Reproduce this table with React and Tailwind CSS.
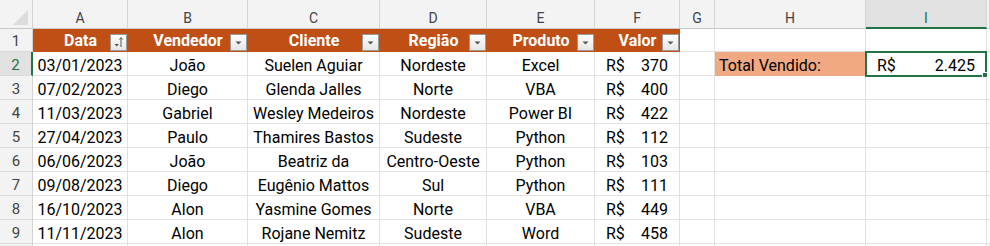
import React from "react";

const cols = ["A", "B", "C", "D", "E", "F", "G", "H", "I", ""];

const data = [
  ["03/01/2023", "João", "Suelen Aguiar", "Nordeste", "Excel", "370"],
  ["07/02/2023", "Diego", "Glenda Jalles", "Norte", "VBA", "400"],
  ["11/03/2023", "Gabriel", "Wesley Medeiros", "Nordeste", "Power BI", "422"],
  ["27/04/2023", "Paulo", "Thamires Bastos", "Sudeste", "Python", "112"],
  ["06/06/2023", "João", "Beatriz da", "Centro-Oeste", "Python", "103"],
  ["09/08/2023", "Diego", "Eugênio Mattos", "Sul", "Python", "111"],
  ["16/10/2023", "Alon", "Yasmine Gomes", "Norte", "VBA", "449"],
  ["11/11/2023", "Alon", "Rojane Nemitz", "Sudeste", "Word", "458"],
];

const headers = ["Data", "Vendedor", "Cliente", "Região", "Produto", "Valor"];

function FilterButton({ sort }) {
  return (
    <div className="absolute right-[1px] bottom-[1px] w-[17px] h-[17px] border border-[#9a9a9a] bg-gradient-to-b from-[#ffffff] to-[#e6e6e6] flex items-center justify-center">
      {sort ? (
        <svg width="15" height="15" viewBox="0 0 15 15">
          <polygon points="3.5,9 8,9 5.75,11.5" fill="#555" />
          <line x1="10" y1="2.5" x2="10" y2="12" stroke="#555" strokeWidth="1" />
          <polyline points="8.3,4.6 10,2.8 11.7,4.6" fill="none" stroke="#555" strokeWidth="1" />
        </svg>
      ) : (
        <svg width="15" height="15" viewBox="0 0 15 15">
          <polygon points="4.5,6.5 10.5,6.5 7.5,9.5" fill="#555" />
        </svg>
      )}
    </div>
  );
}

function RowHeader({ n, active, first }) {
  return (
    <div
      className={
        "text-center text-[15px] leading-[19px] border-b border-b-[#dadada] " +
        (first ? "h-[23px] pt-[3px] " : "h-[24px] pt-[4px] ") +
        (active
          ? "bg-[#e1e1e1] text-[#1e7145] border-r-2 border-r-[#217346]"
          : "bg-[#f3f3f3] text-[#444444] border-r border-r-[#d4d4d4]")
      }
    >
      {n}
    </div>
  );
}

export default function App() {
  return (
    <div className="w-[990px] h-[246px] overflow-hidden bg-white font-['Roboto',sans-serif] text-black">
      <div className="grid grid-cols-[33px_95px_120px_132px_107px_108px_85px_35px_151px_121px_3px]">
        {/* Column header row */}
        <div className="h-[29px] bg-[#f3f3f3] border-r border-r-[#d4d4d4] border-b border-b-[#c8c8c8] flex items-end justify-end pr-[4px] pb-[3px]">
          <svg width="15" height="15" viewBox="0 0 15 15">
            <polygon points="15,0 15,15 0,15" fill="#dcdcdc" />
          </svg>
        </div>
        {cols.map((c, i) =>
          c === "I" ? (
            <div
              key={i}
              className="h-[29px] bg-[#e1e1e1] border-r border-r-[#d4d4d4] border-b-2 border-b-[#217346] text-center text-[14px] leading-[16px] pt-[10px] text-[#1e6e42]"
            >
              {c}
            </div>
          ) : (
            <div
              key={i}
              className="h-[29px] bg-[#f3f3f3] border-r border-r-[#d4d4d4] border-b border-b-[#c8c8c8] text-center text-[14px] leading-[16px] pt-[10px] text-[#444444]"
            >
              {c}
            </div>
          )
        )}

        {/* Row 1 */}
        <RowHeader n={1} first />
        {headers.map((h, i) => (
          <div
            key={h}
            className="relative h-[23px] bg-[#c04f15] text-white font-bold text-[16px] leading-[19px] pt-[2px] text-center"
          >
            {h}
            <FilterButton sort={i === 0} />
          </div>
        ))}
        <div className="h-[23px] border-r border-b border-[#e1e1e1]" />
        <div className="h-[23px] border-r border-b border-[#e1e1e1]" />
        <div className="h-[23px] border-r border-b border-[#e1e1e1]" />
        <div className="h-[23px] border-b border-[#e1e1e1]" />

        {/* Data rows */}
        {data.map((r, ri) => (
          <React.Fragment key={ri}>
            <RowHeader n={ri + 2} active={ri === 0} />
            {r.slice(0, 5).map((v, ci) => (
              <div
                key={ci}
                className="h-[24px] border-r border-b border-[#e1e1e1] text-center text-[16px] leading-[19px] pt-[4px] whitespace-nowrap"
              >
                {v}
              </div>
            ))}
            <div className="h-[24px] border-r border-b border-[#e1e1e1] text-[16px] leading-[19px] pt-[4px] px-[11px] flex justify-between">
              <span>R$</span>
              <span>{r[5]}</span>
            </div>
            <div className="h-[24px] border-r border-b border-[#e1e1e1]" />
            {ri === 0 ? (
              <div className="h-[24px] bg-[#f1a983] border-r border-b border-[#f1a983] text-[16px] leading-[19px] pt-[4px] pl-[4px] whitespace-nowrap">
                Total Vendido:
              </div>
            ) : (
              <div className="h-[24px] border-r border-b border-[#e1e1e1]" />
            )}
            {ri === 0 ? (
              <div className="relative h-[24px] border-r border-b border-[#e1e1e1] text-[16px] leading-[19px] pt-[4px] px-[11px] flex justify-between">
                <span>R$</span>
                <span>2.425</span>
                <div className="absolute -left-px -top-px -right-px -bottom-[2px] border-2 border-[#217346] z-10">
                  <div className="absolute -right-[3px] -bottom-[3px] w-[6px] h-[6px] bg-[#217346] border border-white" />
                </div>
              </div>
            ) : (
              <div className="h-[24px] border-r border-b border-[#e1e1e1]" />
            )}
            <div className="h-[24px] border-b border-[#e1e1e1]" />
          </React.Fragment>
        ))}

        {/* Row 10 (only its top edge is visible) */}
        <div className="h-[24px] bg-[#f3f3f3] border-r border-r-[#d4d4d4]" />
        {cols.map((c, i) => (
          <div key={i} className="h-[24px] border-r border-[#e1e1e1]" />
        ))}
      </div>
    </div>
  );
}
